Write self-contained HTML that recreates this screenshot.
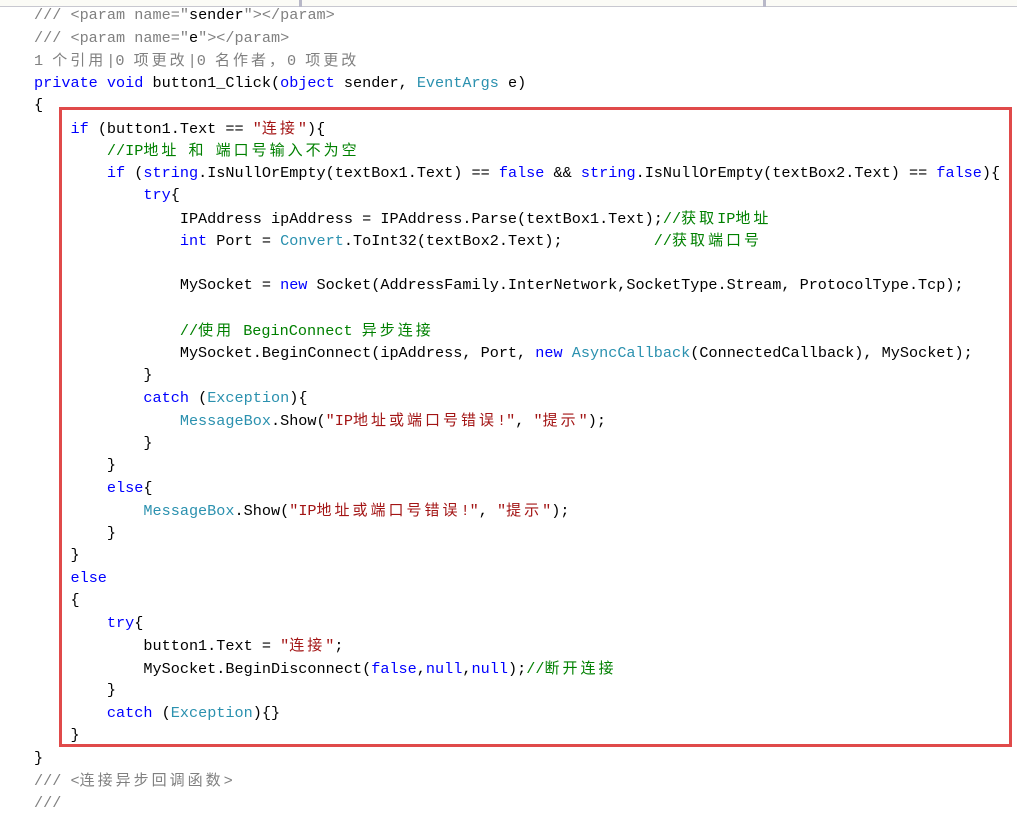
<!DOCTYPE html>
<html><head><meta charset="utf-8"><style>
body{margin:0;width:1017px;height:808px;background:#fff;position:relative;overflow:hidden;font-family:"Liberation Mono","Noto Sans CJK SC",monospace;font-size:15.2px;color:#000}
.l{position:absolute;left:34px;white-space:pre;height:22px;line-height:22px}
.k{color:#0000ff}.t{color:#2b91af}.s{color:#a31515}.g{color:#008000}.d{color:#808080}
.c{font-family:"Noto Sans CJK SC",sans-serif;letter-spacing:3px;font-size:15px}
#top{position:absolute;left:0;top:0;width:1017px;height:6px;background:#fbfbf6;border-bottom:1px solid #c8c8d0}
.dv{position:absolute;top:0;width:3px;height:7px;background:#b8b8c8}
#box{position:absolute;left:59px;top:107px;width:947px;height:634px;border:3px solid #e04a4a}
</style></head><body>
<div id="top"></div><div class="dv" style="left:299px"></div><div class="dv" style="left:763px"></div>
<div id="box"></div>
<div class="l d" style="top:4px">/// &lt;param name="<span style="color:#000">sender</span>"&gt;&lt;/param&gt;</div>
<div class="l d" style="top:26.5px">/// &lt;param name="<span style="color:#000">e</span>"&gt;&lt;/param&gt;</div>
<div class="l d" style="top:49px">1 <span class="c">个引用</span>|0 <span class="c">项更改</span>|0 <span class="c">名作者，</span>0 <span class="c">项更改</span></div>
<div class="l" style="top:71.5px"><span class="k">private void</span> button1_Click(<span class="k">object</span> sender, <span class="t">EventArgs</span> e)</div>
<div class="l" style="top:94px">{</div>
<div class="l" style="top:116.5px">    <span class="k">if</span> (button1.Text == <span class="s">"<span class="c">连接</span>"</span>){</div>
<div class="l g" style="top:139px">        //IP<span class="c">地址</span> <span class="c">和</span> <span class="c">端口号输入不为空</span></div>
<div class="l" style="top:161.5px">        <span class="k">if</span> (<span class="k">string</span>.IsNullOrEmpty(textBox1.Text) == <span class="k">false</span> &amp;&amp; <span class="k">string</span>.IsNullOrEmpty(textBox2.Text) == <span class="k">false</span>){</div>
<div class="l" style="top:184px">            <span class="k">try</span>{</div>
<div class="l" style="top:206.5px">                IPAddress ipAddress = IPAddress.Parse(textBox1.Text);<span class="g">//<span class="c">获取</span>IP<span class="c">地址</span></span></div>
<div class="l" style="top:229px">                <span class="k">int</span> Port = <span class="t">Convert</span>.ToInt32(textBox2.Text);          <span class="g">//<span class="c">获取端口号</span></span></div>
<div class="l" style="top:274px">                MySocket = <span class="k">new</span> Socket(AddressFamily.InterNetwork,SocketType.Stream, ProtocolType.Tcp);</div>
<div class="l g" style="top:319px">                //<span class="c">使用</span> BeginConnect <span class="c">异步连接</span></div>
<div class="l" style="top:341.5px">                MySocket.BeginConnect(ipAddress, Port, <span class="k">new</span> <span class="t">AsyncCallback</span>(ConnectedCallback), MySocket);</div>
<div class="l" style="top:364px">            }</div>
<div class="l" style="top:386.5px">            <span class="k">catch</span> (<span class="t">Exception</span>){</div>
<div class="l" style="top:409px">                <span class="t">MessageBox</span>.Show(<span class="s">"IP<span class="c">地址或端口号错误</span>!"</span>, <span class="s">"<span class="c">提示</span>"</span>);</div>
<div class="l" style="top:431.5px">            }</div>
<div class="l" style="top:454px">        }</div>
<div class="l" style="top:476.5px">        <span class="k">else</span>{</div>
<div class="l" style="top:499px">            <span class="t">MessageBox</span>.Show(<span class="s">"IP<span class="c">地址或端口号错误</span>!"</span>, <span class="s">"<span class="c">提示</span>"</span>);</div>
<div class="l" style="top:521.5px">        }</div>
<div class="l" style="top:544px">    }</div>
<div class="l" style="top:566.5px">    <span class="k">else</span></div>
<div class="l" style="top:589px">    {</div>
<div class="l" style="top:611.5px">        <span class="k">try</span>{</div>
<div class="l" style="top:634px">            button1.Text = <span class="s">"<span class="c">连接</span>"</span>;</div>
<div class="l" style="top:656.5px">            MySocket.BeginDisconnect(<span class="k">false</span>,<span class="k">null</span>,<span class="k">null</span>);<span class="g">//<span class="c">断开连接</span></span></div>
<div class="l" style="top:679px">        }</div>
<div class="l" style="top:701.5px">        <span class="k">catch</span> (<span class="t">Exception</span>){}</div>
<div class="l" style="top:724px">    }</div>
<div class="l" style="top:746.5px">}</div>
<div class="l d" style="top:769px">/// &lt;<span class="c">连接异步回调函数</span>&gt;</div>
<div class="l d" style="top:791.5px">///</div>
</body></html>
